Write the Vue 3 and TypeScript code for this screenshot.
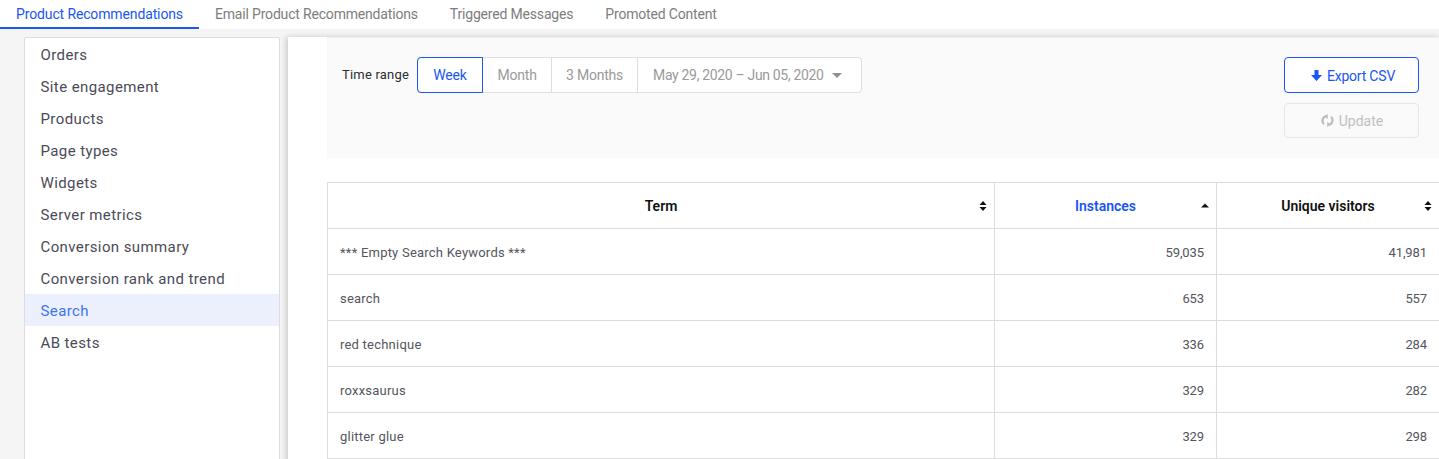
<script setup lang="ts">
const tabs = ['Product Recommendations', 'Email Product Recommendations', 'Triggered Messages', 'Promoted Content']
const nav = ['Orders', 'Site engagement', 'Products', 'Page types', 'Widgets', 'Server metrics', 'Conversion summary', 'Conversion rank and trend', 'Search', 'AB tests']
const rows = [
  ['*** Empty Search Keywords ***', '59,035', '41,981'],
  ['search', '653', '557'],
  ['red technique', '336', '284'],
  ['roxxsaurus', '329', '282'],
  ['glitter glue', '329', '298'],
]
</script>

<template>
  <div class="page">
    <div class="tabs">
      <div v-for="(t, i) in tabs" :key="t" class="tab" :class="{ active: i === 0 }">{{ t }}</div>
    </div>
    <div class="body">
      <aside class="side">
        <div v-for="n in nav" :key="n" class="nav" :class="{ on: n === 'Search' }">{{ n }}</div>
      </aside>
      <main class="main">
        <section class="filters">
          <div class="range">
            <span class="label">Time range</span>
            <div class="group">
              <div class="seg sel">Week</div>
              <div class="seg month">Month</div>
              <div class="seg months">3 Months</div>
              <div class="seg date">May 29, 2020 – Jun 05, 2020<i class="caret"></i></div>
            </div>
          </div>
          <div class="actions">
            <button class="btn export">
              <svg width="11" height="11" viewBox="0 0 11 11"><path d="M3.500 0h4v5h3.500L5.500 11 0 5h3.500z" fill="#1a56f0" /></svg>
              <span class="export-text">Export CSV</span>
            </button>
            <button class="btn update">
              <svg width="13" height="13" viewBox="0 0 13 13" fill="none" stroke="#bdbdbd" stroke-width="2.200"><path d="M5.500 2.200A4.600 4.600 0 0 0 3 10.200" /><path d="M7.500 10.800A4.600 4.600 0 0 0 10 2.800" /><path d="M6.800 0v5L3.600 2.500zM6.200 13V8l3.200 2.500z" fill="#bdbdbd" stroke="none" /></svg>
              Update
            </button>
          </div>
        </section>
        <table class="grid">
          <colgroup><col class="c1" /><col class="c2" /><col class="c3" /></colgroup>
          <thead>
            <tr>
              <th>Term<svg class="sort" width="8" height="10" viewBox="0 0 8 10"><path d="M4 0l3.500 4H.5zM4 10L.5 6h7z" /></svg></th>
              <th class="blue">Instances<svg class="sort" width="8" height="10" viewBox="0 0 8 10"><path d="M4 2.500L8 6.500H0z" /></svg></th>
              <th>Unique visitors<svg class="sort" width="8" height="10" viewBox="0 0 8 10"><path d="M4 0l3.500 4H.5zM4 10L.5 6h7z" /></svg></th>
            </tr>
          </thead>
          <tbody>
            <tr v-for="r in rows" :key="r[0]">
              <td class="term">{{ r[0] }}</td>
              <td class="num">{{ r[1] }}</td>
              <td class="num">{{ r[2] }}</td>
            </tr>
          </tbody>
        </table>
      </main>
    </div>
  </div>
</template>

<style>
html, body { margin: 0; overflow: hidden; background: #f5f5f5; }
</style>

<style scoped>
.page { height: 459px; overflow: hidden; font-family: Roboto, "Liberation Sans", sans-serif; background: #f5f5f5; }
.tabs { display: flex; height: 29px; background: #fff; }
.tab { padding: 0 16px; height: 29px; line-height: 29px; font-size: 14px; letter-spacing: -.18px; color: #7d7d7d; box-sizing: border-box; }
.tab.active { color: #1a56f0; border-bottom: 2px solid #1a56f0; letter-spacing: -.13px; }
.body { display: flex; padding: 8px 0 0 24px; height: 422px; box-sizing: border-box; }
.side { width: 256px; height: 430px; box-sizing: border-box; background: #fff; border: 1px solid #dcdcdc; border-radius: 2px 2px 0 0; flex: none; }
.nav { height: 32px; line-height: 34px; padding-left: 15.500px; font-size: 15px; letter-spacing: .4px; color: #4b4b57; }
.nav.on { background: #ebf0fc; color: #3e73f0; }
.main { margin-left: 8px; flex: 1; background: #fff; padding-left: 39px; box-shadow: -2px 0 6px rgba(0, 0, 0, .18); height: 430px; }
.filters { height: 121px; background: #fafafa; display: flex; justify-content: space-between; padding: 20px 21px 0 15px; box-sizing: border-box; box-shadow: inset 0 1px 1px #eee; }
.range { display: flex; gap: 8px; align-items: flex-start; }
.label { font-size: 13px; letter-spacing: .2px; line-height: 35px; color: #2c2c33; }
.group { display: flex; height: 36px; box-sizing: border-box; border: 1px solid #dedede; border-radius: 4px; background: #fff; font-size: 14px; letter-spacing: -.2px; color: #9a9a9a; }
.seg { line-height: 34px; text-align: center; border-left: 1px solid #dedede; box-sizing: content-box; }
.seg.sel { width: 64px; margin: -1px 0 -1px -1px; height: 34px; border: 1px solid #1a56f0; border-radius: 4px 0 0 4px; color: #1a56f0; }
.seg.month { width: 68px; border-left: 0; }
.seg.months { width: 85px; }
.seg.date { width: 223px; display: flex; padding: 0; align-items: center; gap: 8px; text-indent: 15px; letter-spacing: -.33px; }
.caret { width: 0; height: 0; border: 5px solid transparent; border-top: 5px solid #8f8f8f; border-bottom: 0; }
.actions { display: flex; flex-direction: column; gap: 10px; }
.btn { width: 135px; height: 36px; box-sizing: border-box; border-radius: 4px; font: 14px Roboto, sans-serif; display: flex; align-items: center; justify-content: center; gap: 5px; background: #fff; padding: 0; }
.export { border: 1px solid #1a56f0; color: #1a56f0; padding-left: 3px; }
.export-text { letter-spacing: -.2px; line-height: 16px; padding-top: 1px; }
.update { height: 35px; border: 1px solid #e6e6e6; color: #c0c0c0; background: #fafafa; padding-left: 1px; }
.grid { margin-top: 24px; width: 1112px; table-layout: fixed; border-collapse: collapse; font-size: 13px; color: #55555d; background: #fff; }
.c1 { width: 667px; }
.c2 { width: 222px; }
.c3 { width: 223px; }
.grid th, .grid td { border: 1px solid #dcdcdc; height: 46px; padding: 0 12px; box-sizing: border-box; }
.grid td { padding-top: 2px; }
.grid td.term { letter-spacing: .22px; }
.grid th { position: relative; font-size: 14px; font-weight: 600; color: #111; text-align: center; }
.grid th.blue { color: #1a56f0; }
.sort { position: absolute; right: 7px; top: 18px; fill: #111; }
.grid td.num { text-align: right; letter-spacing: -.1px; }
</style>
